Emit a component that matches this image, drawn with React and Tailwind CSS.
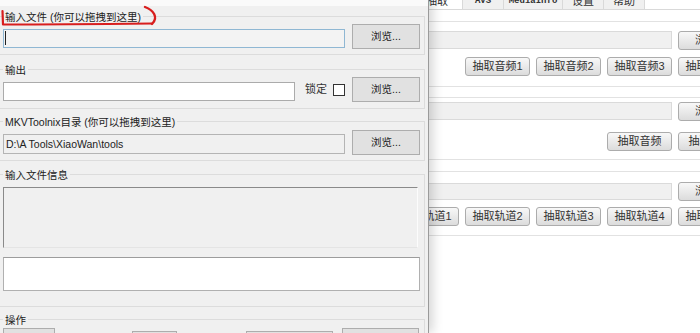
import React from 'react';

const font = "font-['Liberation_Sans','Noto_Sans_CJK_SC',sans-serif]";

// flat Win10 button used in the front window
const FrontBtn = ({ className = '', children }) => (
  <div className={`flex items-center justify-center shrink-0 bg-[#e1e1e1] border border-[#adadad] text-[10.5px] text-[#222] ${className}`}>
    {children}
  </div>
);

// glossy Win7 button used in the back window
const BackBtn = ({ children }) => (
  <div className="flex items-center justify-center shrink-0 w-[65px] h-[19px] rounded-[3px] border border-[#acacac] bg-linear-to-b from-[#f8f8f8] to-[#dcdcdc] text-[11px] text-[#333] leading-none">
    {children}
  </div>
);

const Group = ({ label, className = '', children }) => (
  <div className={`w-[425px] border-t border-r border-b border-[#dcdcdc] ${className}`}>
    <div className="-mt-[7px] ml-[3px] w-fit h-[14px] px-[2px] bg-[#f0f0f0] text-[10.5px] leading-[14px] text-[#222]">
      {label}
    </div>
    {children}
  </div>
);

function BackWindow() {
  const tabs = [
    { name: '抽取', w: 'w-[51px]', active: true, mono: false },
    { name: 'AVS', w: 'w-[41px]', mono: true },
    { name: 'MediaInfo', w: 'w-[59px]', mono: true },
    { name: '设置', w: 'w-[41px]', mono: false },
    { name: '帮助', w: 'w-[41px]', mono: false },
  ];
  return (
    <div className="absolute left-[380px] top-[-10px] w-[373px] h-[345px] bg-white">
      {/* tab strip */}
      <div className="flex h-[20px] pl-[32px] border-b border-[#d9d9d9]">
        {tabs.map(t => (
          <div
            key={t.name}
            className={`${t.w} flex items-end justify-center pb-[1px] border-r border-t border-[#d9d9d9] ${t.active ? 'bg-white' : 'bg-[#f0f0f0]'} ${t.mono ? "font-['Liberation_Mono',monospace] text-[9px] font-bold" : 'text-[11px]'} text-[#333] leading-[13px]`}
          >
            {t.name}
          </div>
        ))}
      </div>

      <div className="pl-[14px] pr-[10px]">
        <div className="mt-[11px] border-t border-b border-[#e2e2e2] pt-[8px] pb-[10px]">
          <div className="flex items-center gap-[6px] h-[20px]">
            <div className="flex-1 h-[18px] bg-[#f0f0f0] border border-[#dadada]" />
            <BackBtn>浏览...</BackBtn>
          </div>
          <div className="mt-[7px] flex justify-end gap-[6px]">
            <BackBtn>抽取音频1</BackBtn>
            <BackBtn>抽取音频2</BackBtn>
            <BackBtn>抽取音频3</BackBtn>
            <BackBtn>抽取音频4</BackBtn>
          </div>
        </div>

        <div className="mt-[10px] border-t border-b border-[#e2e2e2] pt-[3px] pb-[8px]">
          <div className="flex items-center gap-[6px] h-[20px]">
            <div className="flex-1 h-[18px] bg-[#f0f0f0] border border-[#dadada]" />
            <BackBtn>浏览...</BackBtn>
          </div>
          <div className="mt-[11px] flex justify-end gap-[6px]">
            <BackBtn>抽取音频</BackBtn>
            <BackBtn>抽取视频</BackBtn>
          </div>
        </div>

        <div className="mt-[11px] border-t border-b border-[#e2e2e2] pt-[9px] pb-[9px]">
          <div className="flex items-center gap-[6px] h-[20px]">
            <div className="flex-1 h-[17px] bg-[#f0f0f0] border border-[#dadada]" />
            <BackBtn>浏览...</BackBtn>
          </div>
          <div className="mt-[6px] flex justify-end gap-[6px]">
            <BackBtn>抽取轨道1</BackBtn>
            <BackBtn>抽取轨道2</BackBtn>
            <BackBtn>抽取轨道3</BackBtn>
            <BackBtn>抽取轨道4</BackBtn>
            <BackBtn>抽取轨道5</BackBtn>
          </div>
        </div>
      </div>
    </div>
  );
}

function FrontWindow() {
  return (
    <div className="absolute left-0 top-0 w-[429px] h-[333px] bg-[#f0f0f0] border-r border-[#9a9a9a] shadow-[4px_0_10px_rgba(0,0,0,0.16)] overflow-hidden">
      <div className="h-[6px] bg-[#fafafa]" />

      {/* input file */}
      <Group label="输入文件 (你可以拖拽到这里)" className="mt-[10px] pb-[5px]">
        <div className="flex items-center h-[25px] pl-[3px] pr-[4px]">
          <div className="flex-1 h-[19px] mt-[3px] flex items-center bg-[#f3f3f3] border border-[#8fb7d3]">
            <div className="ml-[1px] w-px h-[14px] bg-[#222]" />
          </div>
          <FrontBtn className="ml-[7px] w-[68px] h-[25px]">浏览...</FrontBtn>
        </div>
      </Group>

      {/* output */}
      <Group label="输出" className="mt-[14px] pb-[6px]">
        <div className="flex items-center h-[25px] pl-[3px] pr-[4px]">
          <div className="flex-1 h-[19px] mt-[3px] bg-white border border-[#ababab]" />
          <span className="ml-[10px] text-[11px] text-[#333] leading-none">锁定</span>
          <div className="ml-[6px] w-[12px] h-[12px] bg-white border border-[#333]" />
          <FrontBtn className="ml-[7px] w-[68px] h-[25px]">浏览...</FrontBtn>
        </div>
      </Group>

      {/* mkvtoolnix dir */}
      <Group label="MKVToolnix目录 (你可以拖拽到这里)" className="mt-[12px] pb-[5px]">
        <div className="mt-[1px] flex items-center h-[25px] pl-[3px] pr-[4px]">
          <div className="flex-1 h-[20px] mt-[3px] flex items-center pl-[2px] bg-[#f0f0f0] border border-[#b4b4b4] text-[10.5px] text-[#222] leading-none">
            D:\A Tools\XiaoWan\tools
          </div>
          <FrontBtn className="ml-[7px] w-[68px] h-[25px]">浏览...</FrontBtn>
        </div>
      </Group>

      {/* input info */}
      <Group label="输入文件信息" className="mt-[13px] pb-[15px]">
        <div className="mt-[5px] ml-[3px] mr-[6px] h-[61px] border border-t-[#8a8a8a] border-l-[#8a8a8a] border-r-[#fcfcfc] border-b-[#e4e4e4] bg-[#f0f0f0]" />
        <div className="mt-[9px] ml-[3px] mr-[4px] h-[34px] bg-white border border-[#b0b0b0] border-t-[#9c9c9c]" />
      </Group>

      {/* operations */}
      <Group label="操作" className="mt-[12px] border-b-0">
        <div className="mt-[1px] flex items-start pl-[3px]">
          <FrontBtn className="w-[52px] h-[28px]" />
          <FrontBtn className="ml-[77px] mt-[3px] w-[45px] h-[26px]" />
          <FrontBtn className="ml-[69px] mt-[3px] w-[87px] h-[26px]" />
          <FrontBtn className="ml-[9px] w-[77px] h-[28px]" />
        </div>
      </Group>

      {/* red hand-drawn mark */}
      <svg className="absolute left-0 top-0" width="165" height="30" viewBox="0 0 165 30" fill="none">
        <path d="M2.5 11 L3 24.5 Q 60 24.5 152 23.5" stroke="#d81e1e" strokeWidth="2.2" strokeLinecap="round" strokeLinejoin="round" />
        <path d="M145 7 C 153 10, 159 17, 152 24" stroke="#d81e1e" strokeWidth="2.4" strokeLinecap="round" />
      </svg>
    </div>
  );
}

export default function App() {
  return (
    <div className={`relative w-[700px] h-[333px] overflow-hidden bg-white ${font}`}>
      <BackWindow />
      <FrontWindow />
    </div>
  );
}
